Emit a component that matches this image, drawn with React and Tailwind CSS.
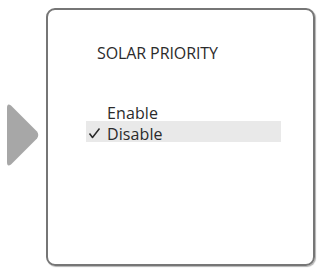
import React from 'react';

const Check = () => (
    <svg width="13" height="12" viewBox="0 0 13 12" className="shrink-0">
        <path d="M1.5 6.5 L4.5 10.5 L11.5 1.5" fill="none" stroke="#2a2a2a" strokeWidth="1.5" strokeLinejoin="round" />
    </svg>
);

const App = () => {
    return (
        <div className="w-[318px] h-[268px] bg-white flex overflow-hidden text-[#2b2b2b]" style={{ fontFamily: '"Open Sans", sans-serif' }}>
            {/* left arrow */}
            <div className="w-[46px] h-full flex items-center pl-[6px] pt-[2px]">
                <svg width="34" height="64" viewBox="0 0 34 64">
                    <path d="M5 2.5 L31 28.5 Q33.5 32 31 35.5 L5 61.5 Q1 64.5 1 59 L1 5 Q1 -0.5 5 2.5 Z" fill="#a7a7a7" />
                </svg>
            </div>

            {/* menu box */}
            <div className="w-[269px] h-[258px] mt-[8px] border-2 border-[#767676] rounded-[9px] shadow-[1px_1px_1px_rgba(0,0,0,0.3)] pt-[32px]">
                <div className="pl-[49px] text-[16px] leading-[22px] tracking-[-0.1px]">SOLAR PRIORITY</div>
                <div className="mt-[38px]">
                    <div className="pl-[59px] h-[19px] text-[16px] leading-[22px] tracking-[0.1px]">Enable</div>
                    <div className="ml-[38px] w-[195px] h-[21px] bg-[#e9e9e9] flex items-start">
                        <div className="w-[21px] pl-[2px] pt-[6px]">
                            <Check />
                        </div>
                        <div className="pt-[2px] text-[16px] leading-[22px] tracking-[0.1px]">Disable</div>
                    </div>
                </div>
            </div>
        </div>
    );
};

export default App;
